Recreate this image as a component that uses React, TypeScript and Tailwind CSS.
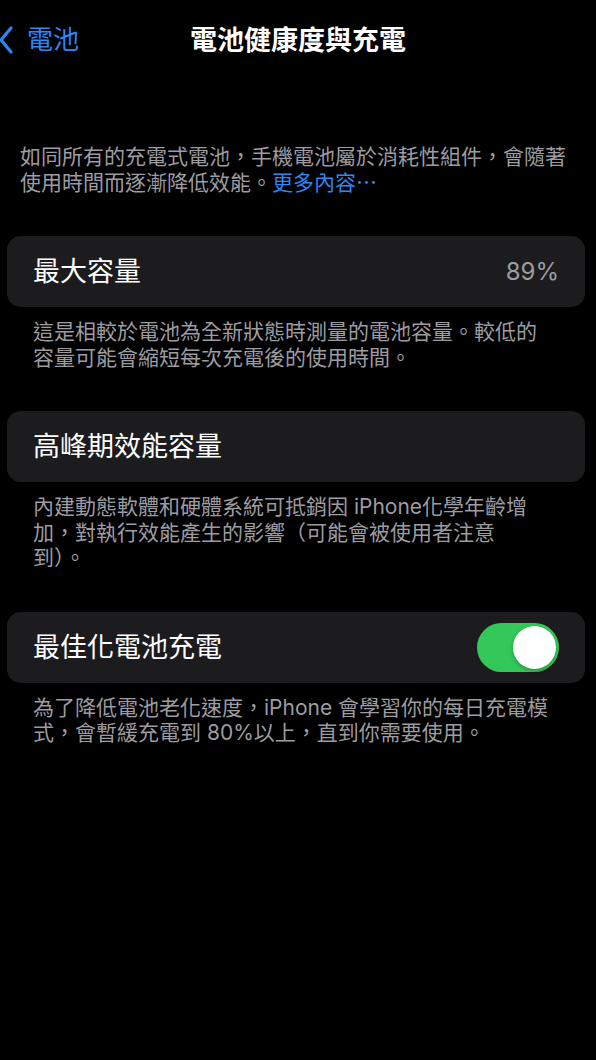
import React from "react"

const FONT = 'font-["Inter","Noto_Sans_CJK_TC",sans-serif]'

function Row({ title, children }: { title: string; children?: React.ReactNode }) {
  return (
    <div className="ml-[7px] mr-[11px] flex h-[71px] items-center justify-between rounded-[14px] bg-[#1c1c1e] pl-[26px] pr-[26px]">
      <span className="text-[27px] leading-none text-white">{title}</span>
      {children}
    </div>
  )
}

function Footer({ children }: { children: React.ReactNode }) {
  return (
    <p className="mt-[12px] px-[33px] text-[21px] leading-[25.5px] text-[#9c9ca1]">{children}</p>
  )
}

export default function App() {
  return (
    <div className={`min-h-[1060px] w-full bg-black ${FONT}`}>
      <header className="grid h-[80px] grid-cols-[1fr_auto_1fr] items-center">
        <div className="flex items-center text-[#2f86f5]">
          <svg width="16" height="28" viewBox="0 0 16 28" className="-ml-[2px]">
            <path d="M13 2 L3 14 L13 26" fill="none" stroke="currentColor" strokeWidth="3.2" strokeLinecap="round" strokeLinejoin="round" />
          </svg>
          <span className="ml-[13px] text-[26px] leading-none">電池</span>
        </div>
        <h1 className="text-[27px] font-semibold leading-none text-white">電池健康度與充電</h1>
        <div />
      </header>

      <p className="mt-[64px] px-[20px] text-[21px] leading-[25.5px] text-[#9c9ca1]">
        如同所有的充電式電池，手機電池屬於消耗性組件，會隨著
        <br />
        使用時間而逐漸降低效能。<span className="text-[#2f86f5]">更多內容⋯</span>
      </p>

      <div className="mt-[41px]">
        <Row title="最大容量">
          <span className="text-[24px] leading-none text-[#9c9ca1]">89%</span>
        </Row>
        <Footer>
          這是相較於電池為全新狀態時測量的電池容量。較低的
          <br />
          容量可能會縮短每次充電後的使用時間。
        </Footer>
      </div>

      <div className="mt-[41px]">
        <Row title="高峰期效能容量" />
        <Footer>
          內建動態軟體和硬體系統可抵銷因 iPhone化學年齡增
          <br />
          加，對執行效能產生的影響（可能會被使用者注意
          <br />
          到）。
        </Footer>
      </div>

      <div className="mt-[41px]">
        <Row title="最佳化電池充電">
          <div className="flex h-[49px] w-[82px] items-center justify-end rounded-full bg-[#34c759] pr-[3px]">
            <div className="h-[43px] w-[43px] rounded-full bg-white shadow-[0_2px_4px_rgba(0,0,0,0.25)]" />
          </div>
        </Row>
        <Footer>
          為了降低電池老化速度，iPhone 會學習你的每日充電模
          <br />
          式，會暫緩充電到 80%以上，直到你需要使用。
        </Footer>
      </div>
    </div>
  )
}
